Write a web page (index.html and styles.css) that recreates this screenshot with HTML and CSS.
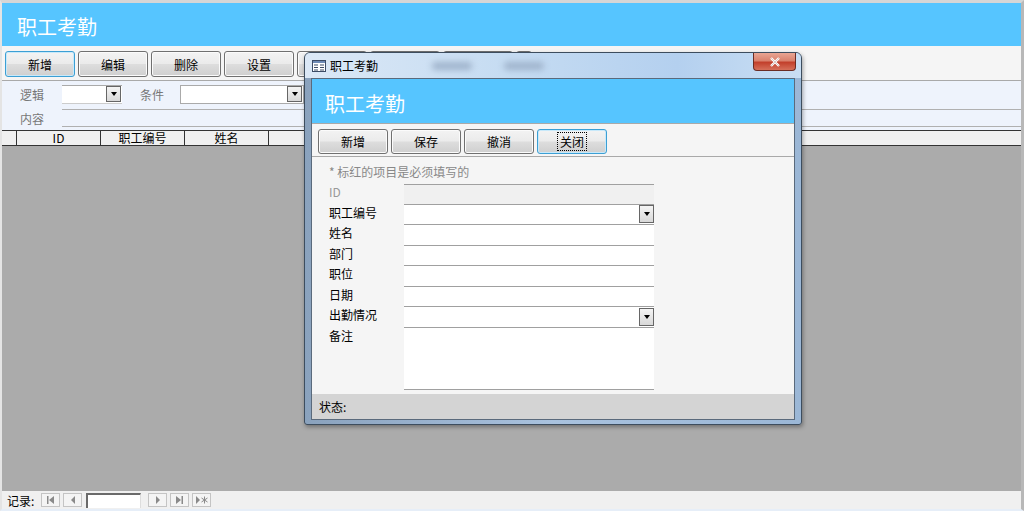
FILE: index.html
```html
<!DOCTYPE html>
<html>
<head>
    <meta charset="UTF-8">
    <title>职工考勤</title>
    <link rel="stylesheet" href="styles.css">
</head>
<body>
    <div class="app">
        <div class="header">职工考勤</div>

        <div class="toolbar">
            <button class="btn focused">新增</button>
            <button class="btn">编辑</button>
            <button class="btn">删除</button>
            <button class="btn">设置</button>
            <button class="btn"></button>
            <button class="btn"></button>
            <button class="btn"></button>
            <button class="btn small"></button>
        </div>

        <div class="filter">
            <div class="filter-row">
                <span class="flabel">逻辑</span>
                <div class="combo logic"><span class="drop"><i></i></span></div>
                <span class="flabel cond">条件</span>
                <div class="combo cond-box"><span class="drop"><i></i></span></div>
            </div>
            <div class="filter-row">
                <span class="flabel">内容</span>
                <div class="content-box"></div>
            </div>
        </div>

        <div class="grid-head">
            <div class="gcell sel"></div>
            <div class="gcell">ID</div>
            <div class="gcell">职工编号</div>
            <div class="gcell">姓名</div>
            <div class="gcell"></div>
            <div class="gcell"></div>
            <div class="gcell"></div>
            <div class="gcell"></div>
            <div class="gcell"></div>
        </div>

        <div class="grid-body"></div>

        <div class="nav">
            <span class="nav-label">记录:</span>
            <span class="nbtn"><svg width="9" height="8" viewBox="0 0 9 8"><rect x="1" y="0" width="1.5" height="8" fill="#8a8a8a"/><path d="M8 0 L3 4 L8 8 Z" fill="#8a8a8a"/></svg></span>
            <span class="nbtn"><svg width="6" height="8" viewBox="0 0 6 8"><path d="M5 0 L1 4 L5 8 Z" fill="#8a8a8a"/></svg></span>
            <span class="nav-input"></span>
            <span class="nbtn"><svg width="6" height="8" viewBox="0 0 6 8"><path d="M1 0 L5 4 L1 8 Z" fill="#8a8a8a"/></svg></span>
            <span class="nbtn"><svg width="9" height="8" viewBox="0 0 9 8"><path d="M1 0 L6 4 L1 8 Z" fill="#8a8a8a"/><rect x="6.5" y="0" width="1.5" height="8" fill="#8a8a8a"/></svg></span>
            <span class="nbtn"><svg width="13" height="8" viewBox="0 0 13 8"><path d="M1 0 L5 4 L1 8 Z" fill="#8a8a8a"/><path d="M9.5 0.5 V7.5 M6.5 2 L12.5 6 M12.5 2 L6.5 6" stroke="#8a8a8a" stroke-width="1"/></svg></span>
        </div>
    </div>

    <div class="dialog">
        <div class="titlebar">
            <svg class="ticon" width="14" height="12" viewBox="0 0 14 12">
                <rect x="0.5" y="0.5" width="13" height="11" fill="#fff" stroke="#3c4c66"/>
                <rect x="1" y="1" width="12" height="2" fill="#6d8ab5"/>
                <path d="M2 5 H6 M2 7.5 H6 M2 10 H6 M8 5 H12 M8 7.5 H12 M8 10 H12" stroke="#3c4c66"/>
            </svg>
            <span class="ttext">职工考勤</span>
            <span class="ghost"></span>
            <span class="ghost"></span>
            <span class="close">
                <svg width="12" height="10" viewBox="0 0 12 10"><path d="M2 1 L10 9 M10 1 L2 9" stroke="#fff" stroke-width="2.4"/><path d="M2 1 L10 9 M10 1 L2 9" stroke="#6a2a20" stroke-width="0.6" opacity="0.4"/></svg>
            </span>
        </div>
        <div class="panel">
            <div class="dheader">职工考勤</div>
            <div class="dtoolbar">
                <button class="btn">新增</button>
                <button class="btn">保存</button>
                <button class="btn">撤消</button>
                <button class="btn focused"><span class="dotted">关闭</span></button>
            </div>
            <div class="form">
                <div class="note">* 标红的项目是必须填写的</div>
                <div class="frow">
                    <span class="lbl disabled">ID</span>
                    <div class="field readonly"></div>
                </div>
                <div class="frow">
                    <span class="lbl">职工编号</span>
                    <div class="field"><span class="drop"><i></i></span></div>
                </div>
                <div class="frow">
                    <span class="lbl">姓名</span>
                    <div class="field"></div>
                </div>
                <div class="frow">
                    <span class="lbl">部门</span>
                    <div class="field"></div>
                </div>
                <div class="frow">
                    <span class="lbl">职位</span>
                    <div class="field"></div>
                </div>
                <div class="frow">
                    <span class="lbl">日期</span>
                    <div class="field"></div>
                </div>
                <div class="frow">
                    <span class="lbl">出勤情况</span>
                    <div class="field"><span class="drop"><i></i></span></div>
                </div>
                <div class="frow memo">
                    <span class="lbl">备注</span>
                    <div class="field"></div>
                </div>
            </div>
            <div class="status">状态:</div>
        </div>
    </div>
</body>
</html>
```

FILE: styles.css
```css
* {
    box-sizing: border-box;
}
body {
    margin: 0;
    background-color: #ffffff;
    font-family: "Noto Sans CJK SC", "Liberation Sans", sans-serif;
    font-size: 12px;
    color: #000;
    overflow: hidden;
}
.app {
    width: 1024px;
    height: 511px;
    display: flex;
    flex-direction: column;
    border-top: 3px solid #d6d6d6;
    border-left: 2px solid #e4e4e4;
    border-right: 3px solid #b8b8b8;
    border-bottom: 2px solid #e6eef8;
}
.header {
    height: 43px;
    flex-shrink: 0;
    background-color: #56c5ff;
    color: #fff;
    font-size: 20px;
    padding-left: 15px;
    line-height: 48px;
}
.toolbar {
    height: 35px;
    flex-shrink: 0;
    background-color: #f5f5f5;
    display: flex;
    gap: 3px;
    padding: 5px 0 0 3px;
    border-bottom: 1px solid #a9a9a9;
}
.btn {
    width: 70px;
    height: 26px;
    font-family: inherit;
    font-size: 12px;
    color: #000;
    padding: 0;
    border: 1px solid #707070;
    border-radius: 3px;
    background: linear-gradient(#f3f3f3 0%, #ebebeb 48%, #dddddd 52%, #cfcfcf 100%);
    box-shadow: inset 0 0 0 1px #fbfbfb;
}
.btn.focused {
    border-color: #3c9fd4;
    box-shadow: inset 0 0 0 1px #c8e9fa;
}
.btn.small {
    width: 16px;
}
.dotted {
    outline: 1px dotted #000;
    padding: 0 2px;
}
.filter {
    height: 49px;
    flex-shrink: 0;
    background-color: #eef3fc;
    padding-top: 3px;
    padding-left: 18px;
}
.filter-row {
    display: flex;
    align-items: center;
    height: 20px;
    margin-bottom: 4px;
}
.flabel {
    color: #777;
    width: 42px;
}
.flabel.cond {
    width: 40px;
    margin-left: 18px;
}
.combo {
    height: 19px;
    background-color: #fff;
    border-top: 1px solid #aaa;
    border-bottom: 1px solid #ccc;
    display: flex;
    justify-content: flex-end;
    align-items: center;
    padding-right: 1px;
}
.combo.logic {
    width: 60px;
}
.combo.cond-box {
    width: 124px;
    border: 1px solid #aaa;
}
.drop {
    width: 15px;
    height: 16px;
    border: 1px solid #666;
    background: linear-gradient(#f4f4f4, #d8d8d8);
    display: flex;
    justify-content: center;
    align-items: center;
}
.drop i {
    width: 0;
    height: 0;
    border-left: 3.5px solid transparent;
    border-right: 3.5px solid transparent;
    border-top: 4px solid #000;
}
.content-box {
    flex: 1;
    height: 18px;
    border-top: 1px solid #b0b0b0;
    border-bottom: 1px solid #b0b0b0;
}
.grid-head {
    height: 16px;
    flex-shrink: 0;
    display: flex;
    background-color: #f0f0f0;
    border-top: 1px solid #333;
    border-bottom: 1px solid #333;
}
.gcell {
    width: 84px;
    border-right: 1px solid #333;
    text-align: center;
    line-height: 14px;
    flex-shrink: 0;
}
.gcell.sel {
    width: 15px;
}
.grid-body {
    flex: 1;
    background-color: #ababab;
}
.nav {
    height: 18px;
    flex-shrink: 0;
    background-color: #f0f0f0;
    display: flex;
    align-items: center;
    padding-left: 5px;
    gap: 3px;
}
.nav-label {
    width: 31px;
}
.nbtn {
    width: 19px;
    height: 14px;
    border: 1px solid #c4c4c4;
    background-color: #f4f4f4;
    display: flex;
    justify-content: center;
    align-items: center;
}
.nav-input {
    width: 55px;
    height: 15px;
    background-color: #fff;
    border-top: 2px solid #6a6a6a;
    border-left: 2px solid #6a6a6a;
    border-right: 1px solid #ddd;
    margin: 0 4px 0 1px;
}
.dialog {
    position: absolute;
    left: 304px;
    top: 52px;
    width: 498px;
    height: 373px;
    border: 1px solid #3d4d5e;
    border-radius: 6px 6px 3px 3px;
    background: linear-gradient(90deg, #8aa2bd 0%, #a9c2de 50%, #9bb7d6 100%);
    box-shadow: 1px 2px 4px rgba(0, 0, 0, 0.35);
    padding: 0 6px 4px 6px;
    display: flex;
    flex-direction: column;
}
.titlebar {
    height: 25px;
    flex-shrink: 0;
    margin: 0 -6px;
    padding-left: 7px;
    border-radius: 5px 5px 0 0;
    background: linear-gradient(90deg, #dbe8f6 0%, #c6dcf2 40%, #b4d0ef 75%, #c9def3 100%);
    display: flex;
    align-items: center;
    position: relative;
}
.ticon {
    margin-right: 4px;
}
.ttext {
    width: 86px;
}
.ghost {
    width: 40px;
    height: 8px;
    margin: 0 16px;
    background-color: #9fb3cb;
    border-radius: 4px;
    filter: blur(3px);
}
.close {
    position: absolute;
    right: 5px;
    top: 0;
    width: 43px;
    height: 18px;
    border: 1px solid #6b2c23;
    border-top: none;
    border-radius: 0 0 4px 4px;
    background: linear-gradient(#e9a593 0%, #d9826e 45%, #c2402c 55%, #d5705a 100%);
    display: flex;
    justify-content: center;
    align-items: center;
}
.panel {
    flex: 1;
    background-color: #f5f5f5;
    border: 1px solid #5a6a7c;
    display: flex;
    flex-direction: column;
}
.dheader {
    height: 44px;
    flex-shrink: 0;
    background-color: #56c5ff;
    color: #fff;
    font-size: 20px;
    padding-left: 13px;
    line-height: 50px;
}
.dtoolbar {
    height: 34px;
    flex-shrink: 0;
    display: flex;
    gap: 3px;
    padding: 5px 0 0 6px;
    border-bottom: 1px solid #a9a9a9;
    border-top: 1px solid #a9a9a9;
}
.dtoolbar .btn {
    width: 70px;
    height: 25px;
}
.form {
    flex: 1;
    padding: 8px 0 0 17px;
}
.note {
    color: #888;
    height: 18px;
    line-height: 14px;
    margin-bottom: 1px;
}
.frow {
    display: flex;
    height: 20.5px;
}
.lbl {
    width: 75px;
    line-height: 15px;
}
.lbl.disabled {
    color: #999;
}
.field {
    width: 250px;
    background-color: #fff;
    border-bottom: 1px solid #a0a0a0;
    display: flex;
    justify-content: flex-end;
    align-items: center;
}
.field.readonly {
    background-color: #f0f0f0;
    border-top: 1px solid #a0a0a0;
}
.field .drop {
    width: 15px;
    height: 18px;
}
.frow.memo {
    height: 62px;
}
.status {
    height: 25px;
    flex-shrink: 0;
    background-color: #d4d4d4;
    padding-left: 7px;
    line-height: 25px;
}
```
